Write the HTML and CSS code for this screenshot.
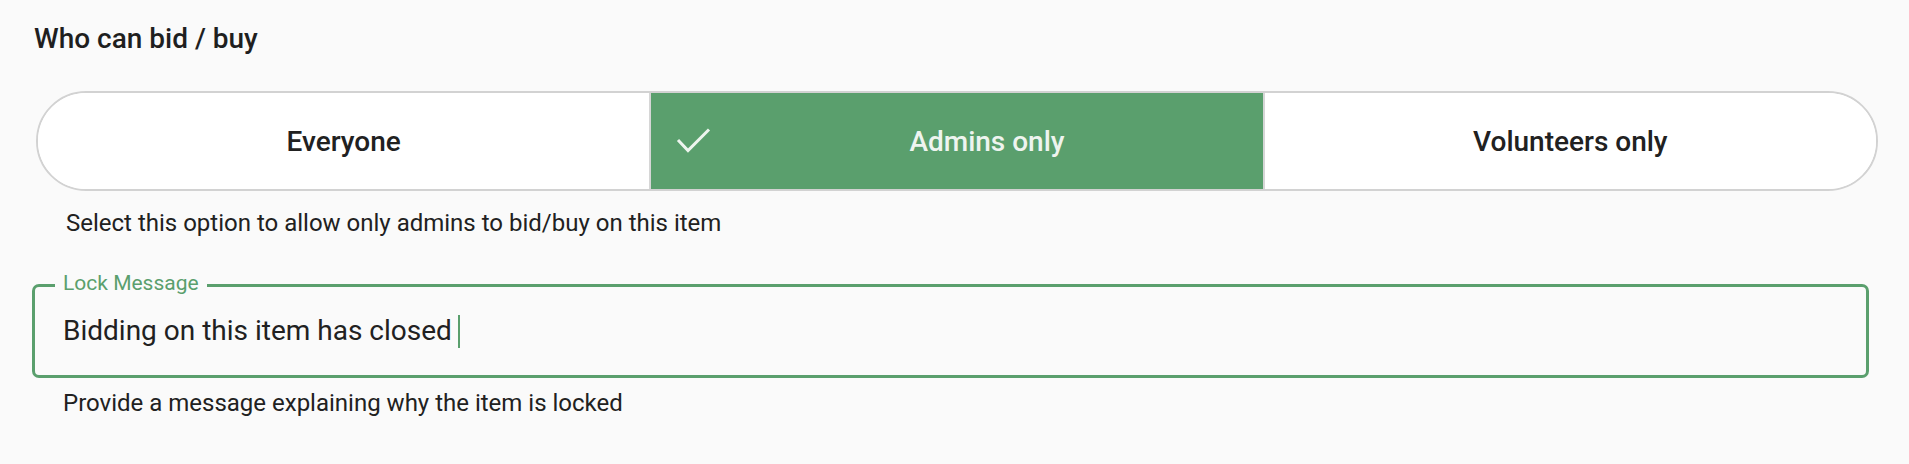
FILE: index.html
```html
<!DOCTYPE html>
<html lang="en">
<head>
<meta charset="utf-8">
<title>Who can bid / buy</title>
<link rel="stylesheet" href="styles.css">
</head>
<body>
<div class="page">
  <h2 class="title">Who can bid / buy</h2>
  <div class="segmented" role="group">
    <button class="seg" type="button"><span class="seg-text">Everyone</span></button>
    <button class="seg seg-selected" type="button">
      <svg class="seg-check" width="38" height="30" viewBox="0 0 38 30" aria-hidden="true">
        <polyline points="3,14 13,24.5 34,3.5" fill="none" stroke="#eef5ef" stroke-width="3" stroke-linecap="butt" stroke-linejoin="miter"/>
      </svg>
      <span class="seg-text">Admins only</span>
    </button>
    <button class="seg" type="button"><span class="seg-text">Volunteers only</span></button>
  </div>
  <p class="help">Select this option to allow only admins to bid/buy on this item</p>
  <div class="field">
    <span class="field-label">Lock Message</span>
    <div class="field-input">Bidding on this item has closed <span class="caret"></span></div>
  </div>
  <p class="helper">Provide a message explaining why the item is locked</p>
</div>
</body>
</html>
```
FILE: styles.css
```css
html, body {
  margin: 0;
  padding: 0;
  background: #fafafa;
}

body {
  font-family: Roboto, "Liberation Sans", Arial, sans-serif;
  color: #212121;
}

.page {
  padding-top: 22px;
  display: flex;
  flex-direction: column;
}

.title {
  margin: 0;
  padding-left: 34px;
  font-size: 28px;
  line-height: 34px;
  font-weight: 500;
  color: #1f1f1f;
}

.segmented {
  margin: 35px 31px 0 36px;
  height: 100px;
  box-sizing: border-box;
  border: 2px solid #d2d2d2;
  border-radius: 50px;
  overflow: hidden;
  display: flex;
  background: #ffffff;
}

.seg {
  flex: 1 1 0;
  min-width: 0;
  margin: 0;
  padding: 0;
  border: 0;
  background: #ffffff;
  font-family: inherit;
  font-size: 28px;
  font-weight: 500;
  color: #212121;
  display: flex;
  align-items: center;
  justify-content: center;
}

.seg + .seg {
  border-left: 2px solid #d6d6d6;
}

.seg-selected {
  background: #5a9f6d;
  color: #eef4ef;
  display: grid;
  grid-template-columns: 60px 1fr;
  align-items: center;
}

.seg-check {
  display: block;
  justify-self: end;
  margin-right: -2px;
}

.seg-selected .seg-text {
  justify-self: center;
}

.help {
  margin: 18px 0 0;
  padding-left: 66px;
  font-size: 24px;
  line-height: 28px;
  color: #212121;
}

.field {
  position: relative;
  margin: 47px 40px 0 32px;
  height: 94px;
  box-sizing: border-box;
  border: 3px solid #5a9f6d;
  border-radius: 7px;
}

.field-label {
  position: absolute;
  top: -16px;
  left: 20px;
  padding: 0 8px;
  background: #fafafa;
  font-size: 21px;
  line-height: 24px;
  color: #5a9f6d;
}

.field-input {
  padding-left: 28px;
  font-size: 28px;
  line-height: 88px;
  color: #212121;
  white-space: pre;
}

.caret {
  display: inline-block;
  width: 2px;
  height: 33px;
  margin-left: -1px;
  vertical-align: -8px;
  background: #5a9f6d;
}

.helper {
  margin: 11px 0 0;
  padding-left: 63px;
  font-size: 24px;
  line-height: 28px;
  color: #212121;
}
```
